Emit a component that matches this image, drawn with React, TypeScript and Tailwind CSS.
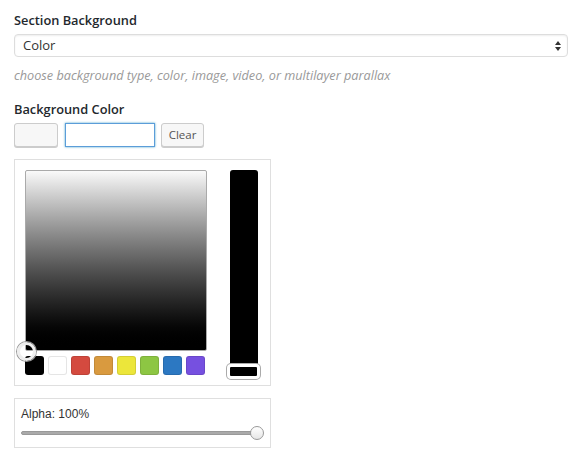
const swatches = ['#000000', '#ffffff', '#d44a3f', '#d99a3f', '#ece63a', '#8dc643', '#2c78c2', '#7650e0']

export default function App() {
  return (
    <div className="w-[583px] h-[449px] bg-white px-[14px] pt-[11px] font-['Open_Sans',sans-serif] text-[#222] overflow-hidden">
      {/* Section background */}
      <div className="text-[12.8px] font-semibold leading-[18px] text-[#23282d]">Section Background</div>
      <div className="mt-[5px] w-[554px] h-[23px] rounded-[4px] border border-[#ddd] shadow-[inset_0_1px_2px_rgba(0,0,0,0.07)] flex items-center justify-between pl-[8px] pr-[4px]">
        <span className="text-[13px] text-[#333]">Color</span>
        <svg width="8" height="12" viewBox="0 0 8 12" className="mr-[1px]">
          <path d="M4 1 L7 5 L1 5 Z" fill="#333" />
          <path d="M4 11 L7 7 L1 7 Z" fill="#333" />
        </svg>
      </div>
      <div className="mt-[9px] text-[12.7px] italic text-[#999] leading-[18px]">
        choose background type, color, image, video, or multilayer parallax
      </div>

      {/* Background color */}
      <div className="mt-[16px] text-[12.8px] font-semibold leading-[18px] text-[#23282d]">Background Color</div>
      <div className="mt-[5px] flex items-center h-[24px]">
        <div className="w-[44px] h-[24px] rounded-[3px] border border-[#ccc] bg-[#f7f7f7] shadow-[0_1px_0_#ccc]" />
        <div className="ml-[7px] w-[90px] h-[24px] border border-[#5b9dd9] shadow-[0_0_2px_rgba(30,140,190,0.8)]" />
        <div className="ml-[6px] w-[43px] h-[24px] rounded-[3px] border border-[#ccc] bg-[#f7f7f7] shadow-[0_1px_0_#ccc] flex items-center justify-center text-[11.5px] text-[#555]">
          Clear
        </div>
      </div>

      {/* Picker */}
      <div className="mt-[12px] w-[257px] h-[227px] border border-[#dfdfdf] flex pl-[10px] pt-[10px]">
        <div className="flex flex-col">
          <div className="relative w-[182px] h-[181px] rounded-[2px] border border-[#aaa] bg-gradient-to-b from-[#fafafa] to-[#000]">
            <div className="absolute left-[-9px] bottom-[-11px] w-[19px] h-[19px] rounded-full border-[3px] border-[#eee] shadow-[0_0_0_1px_#999]" />
          </div>
          <div className="mt-[5px] flex gap-[4px]">
            {swatches.map((c) => (
              <div
                key={c}
                className="w-[19px] h-[19px] rounded-[3px] border border-[rgba(0,0,0,0.1)]"
                style={{ backgroundColor: c }}
              />
            ))}
          </div>
        </div>
        <div className="ml-[23px] relative w-[28px] h-[208px] rounded-[3px] bg-black">
          <div className="absolute left-[-3px] bottom-[-1px] w-[33px] h-[15px] rounded-[4px] border-[3px] border-white shadow-[0_0_0_1px_#aaa] bg-black" />
        </div>
      </div>

      {/* Alpha */}
      <div className="mt-[12px] w-[257px] h-[50px] border border-[#dfdfdf] px-[6px] pt-[8px] font-['Liberation_Sans',Arial,sans-serif]">
        <div className="text-[12px] leading-[14px] text-[#333]">Alpha: 100%</div>
        <div className="relative mt-[10px] h-[4px] w-[236px] rounded-full bg-[#aaa] border border-[#999]">
          <div className="absolute right-[-8px] top-[-6px] w-[14px] h-[14px] rounded-full border border-[#999] bg-gradient-to-b from-white to-[#e6e6e6]" />
        </div>
      </div>
    </div>
  )
}
